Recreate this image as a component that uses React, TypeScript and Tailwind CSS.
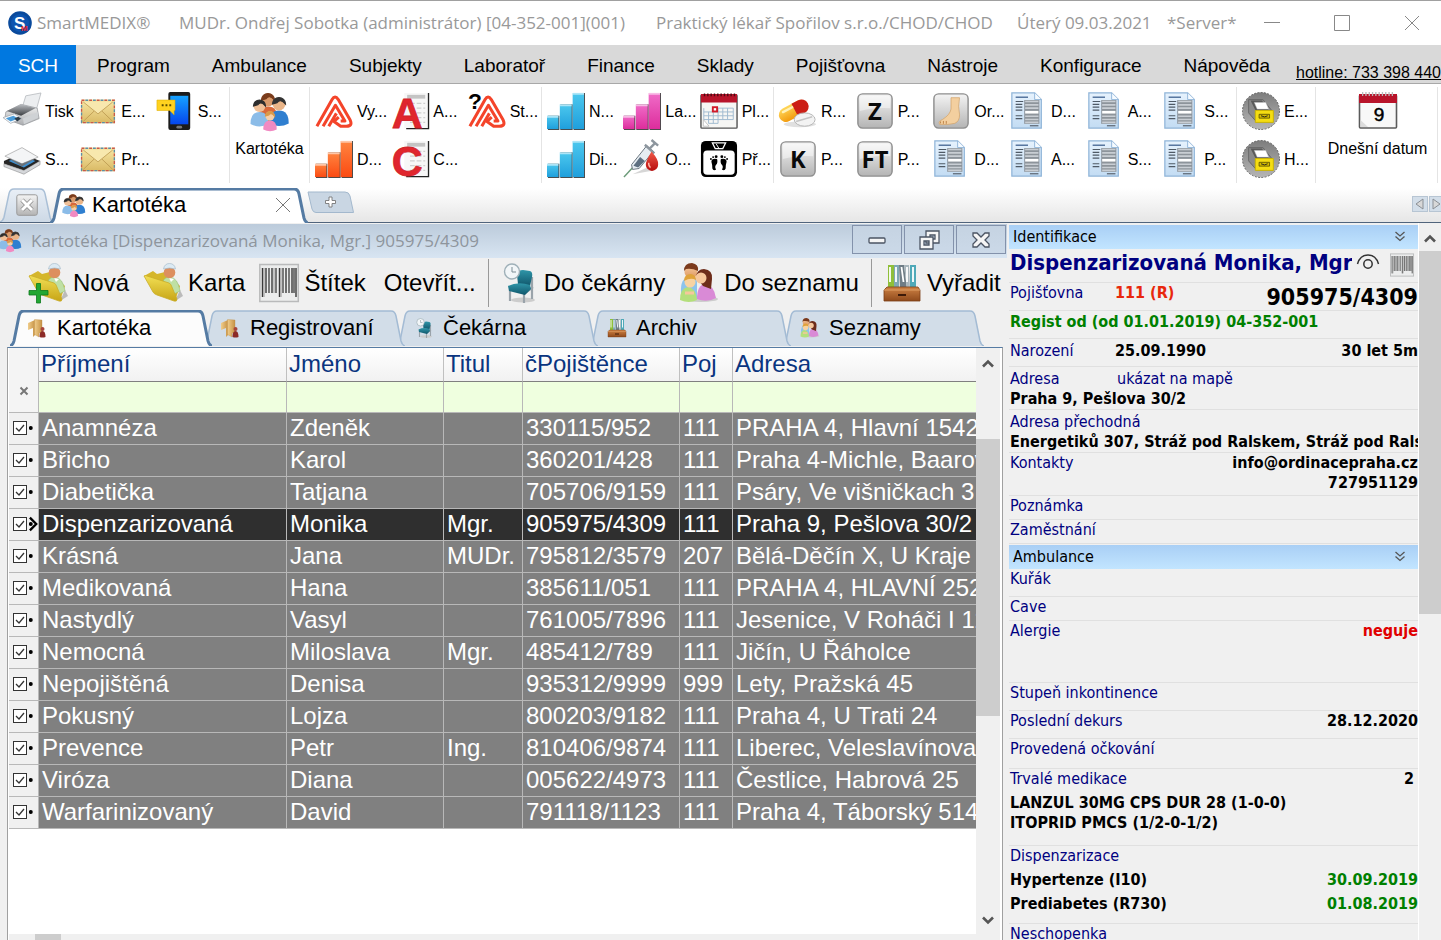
import React from "react";

type IconProps = { className?: string };

const Svg = ({ className = "size-10", children }: { className?: string; children: React.ReactNode }) => (
  <svg viewBox="0 0 40 40" className={`shrink-0 overflow-visible ${className}`} aria-hidden="true">
    {children}
  </svg>
);

const Gradient = ({ id, from, to, flat = false }: { id: string; from: string; to: string; flat?: boolean }) => (
  <linearGradient id={id} x1="0" y1="0" x2={flat ? "1" : "0"} y2={flat ? "0" : "1"}>
    <stop offset="0" stopColor={from} />
    <stop offset="1" stopColor={to} />
  </linearGradient>
);

const Gradients = () => (
  <svg className="absolute size-0" aria-hidden="true">
    <defs>
      <Gradient id="orange" from="#ff8540" to="#fb4a12" />
      <Gradient id="blue" from="#4cc8ee" to="#1f9fdc" />
      <Gradient id="pink" from="#f06cc8" to="#dd2d9c" />
      <Gradient id="key" from="#f4f4f4" to="#b4b4b4" />
      <Gradient id="doc" from="#e6f2fd" to="#c3dcf3" />
      <Gradient id="mail" from="#f8e7a6" to="#d9b964" />
      <Gradient id="phone" from="#16a2ff" to="#0546ee" />
      <Gradient id="folder" from="#f2df55" to="#c7a516" />
      <Gradient id="disc" from="#7d7d7d" to="#b5b5b5" />
      <Gradient id="metal" from="#f5f5f5" to="#a9abae" />
      <Gradient id="printer" from="#b9bcc0" to="#3c3f43" />
      <Gradient id="skin" from="#f6c79c" to="#dc9760" />
      <Gradient id="wood" from="#cf8244" to="#8f4a1c" />
      <Gradient id="chair" from="#2f95a8" to="#10566b" />
      <Gradient id="door" from="#f0cd8b" to="#c69245" flat />
      <Gradient id="blood" from="#f05a4a" to="#b80d0d" />
      <Gradient id="pillY" from="#ffd75a" to="#f29a0c" />
      <Gradient id="tabIdle" from="#e9eff6" to="#cdd9e6" />
    </defs>
  </svg>
);

const Printer = () => (
  <Svg>
    <path d="M20 17 24 4 40 1 35 19Z" fill="#eceef0" stroke="#a9adb2" strokeWidth=".7" />
    <path d="M3 21 19 13 36 17 38 28 21 35 2 28Z" fill="url(#metal)" stroke="#8b8e92" strokeWidth=".7" />
    <path d="M4 20 19 13 34 17 19 25Z" fill="url(#printer)" />
    <path d="M21 28 37 21V27L22 34Z" fill="#cfd2d5" />
    <path d="M0 27 12 23 20 28 8 33Z" fill="#f7f9fb" stroke="#9ba0a6" strokeWidth=".7" />
    <path d="M3 27.500 11 25 16 28 8 31Z" fill="#4b9bd8" />
    <path d="M12 28 16 26 19 28 15 31Z" fill="#2c3b47" />
  </Svg>
);

const Scanner = () => (
  <Svg>
    <path d="M1 22 19 14 39 22 22 32 1 25Z" fill="#262626" />
    <path d="M1 25 22 32 39 22V26L22 36 1 28Z" fill="#d5d7da" stroke="#777" strokeWidth=".5" />
    <path d="M6 22 19 16 34 22 22 29Z" fill="#3e8fd0" />
    <path d="M2 17 20 8 37 18 20 25Z" fill="#f4f5f6" stroke="#a8a8a8" strokeWidth=".8" />
    <path d="M5 19 20 25 35 19 20 28Z" fill="#6d7277" />
  </Svg>
);

const Mail = () => (
  <Svg>
    <rect x="2" y="8" width="36" height="25" rx="1" fill="url(#mail)" />
    <rect x="2.700" y="8.700" width="34.500" height="23.500" fill="none" stroke="#c9584c" strokeWidth="1.400" strokeDasharray="3 5" />
    <rect x="2.700" y="8.700" width="34.500" height="23.500" fill="none" stroke="#5c8fa8" strokeWidth="1.400" strokeDasharray="3 5" strokeDashoffset="4" />
    <path d="M4.500 31 16 20M35.500 31 24 20" stroke="#c09f55" />
    <path d="M4.500 10.500 20 23 35.500 10.500" fill="#f8e8ae" stroke="#c4a45c" />
  </Svg>
);

const Phone = () => (
  <Svg>
    <rect x="13" y="0" width="23" height="40" rx="2" fill="#1b1b1b" />
    <rect x="15" y="4" width="19" height="30" fill="url(#phone)" />
    <rect x="21.500" y="35.500" width="6" height="3" rx="1.500" fill="#777" />
    <path d="M1 8.500H20V19.500H19V24L14.500 19.500H1Z" fill="#ffd21f" stroke="#e0b000" strokeWidth=".6" />
    <path d="M6 14h2M10 14h2M14 14h2" stroke="#5a4a00" strokeWidth="2" />
  </Svg>
);

const Person = ({ x, y, r, hair, skin, shirt }: { x: number; y: number; r: number; hair: string; skin: string; shirt: string }) => (
  <g>
    <path d={`M${x - r * 1.500} ${y + r * 3}q0 ${-r * 2} ${r * 1.500} ${-r * 2}t${r * 1.500} ${r * 2}q${-r * 1.500} ${r * 0.8} ${-r * 3} 0`} fill={shirt} />
    <circle cx={x} cy={y} r={r} fill={skin} />
    <path d={`M${x - r} ${y}a${r} ${r} 0 0 1 ${r * 2} 0q${-r * 0.8} ${-r * 0.9} ${-r * 1.300} ${-r * 0.2}z`} fill={hair} stroke={hair} strokeWidth="1.200" />
  </g>
);

const Family = ({ className }: IconProps) => (
  <Svg className={className}>
    <Person x={18} y={9} r={6.500} hair="#7a3c1c" skin="#d99a6b" shirt="#d9693b" />
    <Person x={29} y={13} r={6.500} hair="#333" skin="#eab588" shirt="#2f7fd0" />
    <Person x={9.500} y={15} r={6} hair="#2d2d2d" skin="#f0c098" shirt="#8bbce8" />
    <Person x={20} y={25} r={4.500} hair="#d99a4a" skin="#f7cfa8" shirt="#f18ac2" />
  </Svg>
);

const Logo = ({ question = false }: { question?: boolean }) => (
  <Svg>
    <g fill="none" stroke="#f4442a" strokeWidth="3.200" strokeLinejoin="round">
      <path d="M2 36 18 8Q21 2.500 24.500 8L37 29.500Q40 36 33 36H27L20 31 25 26.500" />
      <path d="M8.500 36 21.500 14 31.500 30.500H27" />
      <path d="M14.500 36 22.500 22.500" />
    </g>
    {question && (
      <text x="0" y="18" fontFamily="Liberation Sans, sans-serif" fontWeight="700" fontSize="24" fill="#000">?</text>
    )}
  </Svg>
);

const Bars = ({ tone }: { tone: "orange" | "blue" | "pink" }) => {
  const fill = `url(#${tone})`;
  return (
    <Svg>
      <path d="M1 25h12v15H1zM14 13h13v27H14zM28 1h12v39H28z" fill="#4a4a4a" />
      <path d="M0 25h12v14H0z" fill={fill} />
      <path d="M13.500 13H26v26H13.500z" fill={fill} />
      <path d="M27 1h12v38H27z" fill={fill} />
      <path d="M0 25h12v2H0zM13.500 13h12.500v2H13.500zM27 1h12v2H27z" fill="#fff" opacity=".55" />
    </Svg>
  );
};

const LetterSheet = ({ letter }: { letter: string }) => (
  <Svg>
    <path d="M14 1h25v37H14z" fill="#f7f7f7" />
    <path d="M39.500 1v37.500H16" stroke="#222" fill="none" strokeWidth="1.400" />
    <path d="M17 5h19" stroke="#c4c4c4" strokeWidth="4" />
    <path d="M20 12h16M20 17h16M20 22h16M20 27h16M20 32h16" stroke="#cfcfcf" strokeWidth="1.500" strokeDasharray="5 2" />
    <text x="17" y="38" textAnchor="middle" fontFamily="Liberation Sans, sans-serif" fontWeight="700" fontSize="45" fill="#e0262d" stroke="#d0222a" strokeWidth=".8">{letter}</text>
  </Svg>
);

const Syringe = () => (
  <Svg>
    <path d="M10 36 36 24 32 32Z" fill="#bbb" opacity=".6" />
    <path d="M1 39 12 27" stroke="#6b9a78" strokeWidth="1.500" />
    <path d="M9 26 25 6 32 12 17 30 10 31Z" fill="#e6edf2" stroke="#68737c" />
    <path d="M11 27 18 18 23 22 16 29Z" fill="#5d6f80" />
    <path d="M28 9 34 3M30 0l7 6M23 5l10 9" stroke="#8d969e" strokeWidth="2.500" />
    <path d="M30 12q8 9 7 14a6.500 6.500 0 0 1-13 0q0-4 6-14" fill="url(#blood)" />
    <path d="M27 24q0 4 2 5" stroke="#ffb5a8" strokeWidth="1.500" fill="none" />
  </Svg>
);

const Calendar = () => (
  <Svg>
    <rect x="1" y="3" width="38" height="35" rx="1" fill="#f6f6f4" stroke="#555" strokeWidth="1.500" />
    <path d="M1 2h38v9H1z" fill="#b8142a" />
    <path d="M4 3h33" stroke="#4a0a12" strokeWidth="3" strokeDasharray="1.500 2" />
    <path d="M13 17h22M4 21h31M4 25h31M4 29h31M9 33h10M4 17v12M9 21v12M14 17v16M19 17v16M24 17v12M29 17v12M35 17v12" stroke="#9fb9d0" strokeWidth="1" fill="none" />
    <rect x="13.500" y="16" width="4.500" height="4.500" fill="#fff" stroke="#d11a2a" strokeWidth="2" />
    <path d="M3.500 29l6 7H3.500z" fill="#fff" stroke="#aaa" strokeWidth=".7" />
  </Svg>
);

const Scale = () => (
  <Svg>
    <rect x="1" y="1" width="38" height="38" rx="5" fill="#000" />
    <rect x="3.500" y="11" width="33" height="25.500" rx="4" fill="#fff" />
    <path d="M13 3h14l-3 6h-8z" fill="none" stroke="#fff" strokeWidth="1.300" />
    <path d="M20 9 17 4" stroke="#fff" />
    <path d="M18 20q1 4-1 6t0 5q-3 2-4-1 0-4-1-7 0-4 6-3M22 20q-1 4 1 6t0 5q3 2 4-1 0-4 1-7 0-4-6-3" fill="#000" />
    <g fill="#000">
      <circle cx="17" cy="17.500" r="1.500" /><circle cx="13.800" cy="18" r="1" /><circle cx="11.500" cy="20" r="1" />
      <circle cx="23" cy="17.500" r="1.500" /><circle cx="26.200" cy="18" r="1" /><circle cx="28.500" cy="20" r="1" />
    </g>
  </Svg>
);

const Pills = () => (
  <Svg>
    <ellipse cx="22" cy="34" rx="17" ry="3" fill="#ccc" opacity=".6" />
    <g transform="rotate(-28 16 20)">
      <rect x="-1" y="12" width="33" height="15" rx="7.500" fill="url(#pillY)" />
      <path d="M17 12h8a7.500 7.500 0 0 1 0 15h-8z" fill="#cc1f16" />
      <path d="M5 15.500h11" stroke="#fff2b8" strokeWidth="2.500" strokeLinecap="round" />
    </g>
    <ellipse cx="27" cy="29" rx="11" ry="7" fill="#f3f3f3" stroke="#b5b5b5" />
    <path d="M18 31 35 26" stroke="#c4c4c4" strokeWidth="1.500" />
  </Svg>
);

const Key = ({ label }: { label: string }) => (
  <Svg>
    <rect x="2" y="2" width="36" height="36" rx="5" fill="url(#key)" stroke="#8d8d8d" strokeWidth="1.500" />
    <path d="M4 20V7q0-3 3-3h26q3 0 3 3v10Q18 16 4 20" fill="#fff" opacity=".45" />
    <text x="20" y="29" textAnchor="middle" fontFamily="Open Sans, sans-serif" fontWeight="700" fontSize="25" fill="#0a0a0a">{label}</text>
  </Svg>
);

const Foot = () => (
  <Svg>
    <rect x="2" y="2" width="36" height="36" rx="5" fill="url(#key)" stroke="#8d8d8d" strokeWidth="1.500" />
    <path d="M20 6h9q-2 9 0 18 0 7-5 9-8 2-16 1-2-3 3-5 8-5 9-11z" fill="#f3cf9f" stroke="#d3a56c" strokeWidth=".8" />
    <path d="M9 33v-2M12 33.500v-3M15 33.500v-3" stroke="#bb8148" />
  </Svg>
);

const Doc = () => (
  <Svg>
    <path d="M3 1h24l7 7v30H3z" fill="url(#doc)" stroke="#8fb4d8" strokeWidth="1.300" />
    <path d="M27 1v7h7" fill="#f6fbff" stroke="#8fb4d8" />
    <path d="M7 5.500h13" stroke="#4f6f9a" strokeWidth="1.500" />
    <path d="M7 10h8M7 13h7M7 16h7M7 19h7M7 25h7M7 28h7" stroke="#4f5a66" strokeWidth="1.300" />
    <path d="M16 8.500h16v25H16z" fill="#8d949b" />
    <path d="M17 10h14M17 13.500h14M17 17h14M17 25.500h14M17 29h14M17 32h14" stroke="#c9ced4" strokeWidth="1.700" />
    <path d="M17 21.300h14" stroke="#fff" strokeWidth="2.800" />
    <path d="M22 35.500h9" stroke="#6a7684" strokeWidth="1.500" />
  </Svg>
);

const Archive = () => (
  <Svg>
    <circle cx="20" cy="20" r="19.500" fill="url(#disc)" stroke="#5c5c5c" strokeDasharray="2 1.500" />
    <path d="M7 8h15l9 11v11H14L7 22z" fill="#8a8a8a" stroke="#666" />
    <path d="M9 9h12l7 10H14z" fill="#5a5a5a" />
    <path d="M13 11h12l3 7H16z" fill="#fff" stroke="#ccc" strokeWidth=".5" />
    <path d="M14 19.500h19V32H14z" fill="#f5dd12" stroke="#c9b200" />
    <path d="M18 23.500h11v4H18z" fill="#d6bd00" stroke="#4d4400" strokeWidth=".8" />
    <path d="M20 25q4 2.500 7 0" stroke="#222" fill="none" />
  </Svg>
);

const Today = () => (
  <Svg>
    <rect x="1.500" y="4" width="37" height="33" rx="1" fill="#f8f8f8" stroke="#5b5b5b" strokeWidth="1.600" />
    <path d="M1 3h38v9H1z" fill="#b8142a" />
    <path d="M4 3h33" stroke="#bbb" strokeWidth="4" strokeDasharray="1.300 2" />
    <path d="M2.500 29 10 36H2.500z" fill="#dcdcdc" />
    <text x="21" y="29.500" textAnchor="middle" fontFamily="Liberation Sans, sans-serif" fontSize="19" fill="#000" stroke="#000" strokeWidth=".5">9</text>
  </Svg>
);

const PatientFolder = ({ plus = false }: { plus?: boolean }) => (
  <Svg>
    <path d="M32 38 40 33 37 27Z" fill="#bbb" />
    <path d="M1 13 10 8 14 11 22 9 37 23 32 38Z" fill="#d5b62b" />
    <path d="M20 19q1-5 7-5 8 1 10 14l-6 3-11-6z" fill="#bfe0a4" stroke="#93bd78" strokeWidth=".6" />
    <path d="M26 15 28 19 31 16Z" fill="#fff" />
    <circle cx="26.500" cy="9.500" r="5.800" fill="#dd8f5e" />
    <path d="M20.500 6q1-5.500 6-5.500t6 5.500q-6-2-12 0" fill="#dceaf3" stroke="#a8bccb" strokeWidth=".7" />
    <path d="M1 13Q2 12 4 13L26 20Q28 21 28.500 23L34 36Q34 39 31 38L14 32Q11 31 10 29Z" fill="url(#folder)" stroke="#c9ac28" strokeWidth=".8" />
    {plus && <path d="M8.500 20.500h4v7h7.500v4.500h-7.500v8h-4v-8H1v-4.500h7.500z" fill="#22a632" stroke="#0c7a1c" strokeWidth=".8" />}
  </Svg>
);

const Barcode = ({ className }: IconProps) => (
  <Svg className={className}>
    <rect x=".8" y="1.500" width="38.500" height="37" fill="#eceded" stroke="#b9babb" strokeWidth="1.500" />
    <path d="M3.500 5v29M20.500 5v29M37 5v29M7 5v25M13 5v25M27 5v25M33 5v25" stroke="#3a3a3a" strokeWidth="1.400" />
    <path d="M10 5v25M17 5v25M24 5v25M30 5v25M35 5v25" stroke="#6d6d6d" strokeWidth="1.800" />
    <path d="M5 5v29M22 5v29M15 5v25" stroke="#9a9a9a" />
  </Svg>
);

const Chair = ({ className }: IconProps) => (
  <Svg className={className}>
    <g transform="translate(4 0)">
      <ellipse cx="20" cy="37" rx="12" ry="2.500" fill="#ccc" />
      <path d="M7 26v12M29 14v22M21 30v10M30 24 22 30" stroke="#9aa3aa" strokeWidth="2.200" />
      <path d="M14 12q1-5 6-5l7 1q3 1 2 6l-2 9-12-2z" fill="url(#chair)" />
      <path d="M5 23q10-5 22-1l1 4-6 6-16-4z" fill="url(#chair)" />
      <circle cx="9" cy="8.500" r="7.500" fill="#f2f6f8" stroke="#9fb0b8" strokeWidth="1.400" />
      <path d="M9 4v5h4" stroke="#7d8d95" fill="none" />
    </g>
  </Svg>
);

const Parents = ({ className }: IconProps) => (
  <Svg className={className}>
    <ellipse cx="22" cy="36" rx="17" ry="3" fill="#ccc" />
    <path d="M2 30q-1-15 8-16l8 2v20z" fill="#8dc4ec" />
    <circle cx="12" cy="9" r="6.500" fill="url(#skin)" />
    <path d="M5 8q0-8 8-8 7 1 6 8-6-3-12-2z" fill="#7b3a1c" />
    <path d="M18 36q0-14 8-15 9 1 11 14-9 5-19 1" fill="#d98ad6" />
    <path d="M17 14q1-8 8-8 9 1 8 10l-1 10-8-3z" fill="#6d2c1a" />
    <circle cx="22" cy="15" r="5.500" fill="#f6c79c" />
    <path d="M1 37q0-12 8-13 8 1 9 13-8 4-17 0" fill="#b4df7c" />
    <circle cx="11" cy="19" r="5.500" fill="#f8d3a2" />
    <path d="M5 18q0-7 7-7 5 1 5 6-5-3-12 1" fill="#e0a33a" />
    <path d="M6 30h9" stroke="#f6c79c" strokeWidth="3" />
  </Svg>
);

const Binders = ({ className }: IconProps) => (
  <Svg className={className}>
    <path d="M6 2h6v24H6z" fill="#8fbf3a" />
    <path d="M12 2h5v24h-5z" fill="#7fa8b4" />
    <path d="M17 2h5l3 24h-7z" fill="#6f7d86" />
    <path d="M22 2h5l1 24h-3z" fill="#a9b6bc" />
    <path d="M28 2h6v24h-6z" fill="#4fa9b8" />
    <path d="M8 4v15M14 4v15M19.500 4l2 15M25 4v15M31 4v15" stroke="#fff" strokeWidth="1.800" />
    <path d="M5 24h31l2 3v11H2V27z" fill="url(#wood)" stroke="#7b3d14" strokeWidth=".8" />
    <path d="M2 27h36" stroke="#e0a066" />
    <path d="M16 31h8v2h-8z" fill="#3d1a08" />
  </Svg>
);

const Doorway = ({ className }: IconProps) => (
  <Svg className={className}>
    <path d="M0 10 14 4V34L10 38V20L0 24Z" fill="url(#door)" />
    <path d="M13 3 28 4V32L22 30V38L13 33Z" fill="url(#door)" stroke="#b98b48" strokeWidth=".7" />
    <circle cx="29" cy="22" r="4" fill="#a8453a" />
    <path d="M23 38q0-12 6-12 6 0 6 12-6 2-12 0" fill="#8c2b27" />
  </Svg>
);

type Tool = { label: string; icon: React.ReactNode };
type Group = { name: string; width: string; columns: string; tools: Tool[] };

const groups: Record<string, Group> = {
  output: {
    name: "Výstupy", width: "w-[229px]", columns: "grid-cols-3",
    tools: [
      { label: "Tisk", icon: <Printer /> }, { label: "S...", icon: <Scanner /> },
      { label: "E...", icon: <Mail /> }, { label: "Pr...", icon: <Mail /> },
      { label: "S...", icon: <Phone /> },
    ],
  },
  insurance: {
    name: "Vykazování", width: "w-[229px]", columns: "grid-cols-3",
    tools: [
      { label: "Vy...", icon: <Logo /> }, { label: "D...", icon: <Bars tone="orange" /> },
      { label: "A...", icon: <LetterSheet letter="A" /> }, { label: "C...", icon: <LetterSheet letter="C" /> },
      { label: "St...", icon: <Logo question /> },
    ],
  },
  care: {
    name: "Péče", width: "w-[229px]", columns: "grid-cols-3",
    tools: [
      { label: "N...", icon: <Bars tone="blue" /> }, { label: "Di...", icon: <Bars tone="blue" /> },
      { label: "La...", icon: <Bars tone="pink" /> }, { label: "O...", icon: <Syringe /> },
      { label: "Pl...", icon: <Calendar /> }, { label: "Př...", icon: <Scale /> },
    ],
  },
  forms: {
    name: "Formuláře", width: "w-[460px]", columns: "grid-cols-6",
    tools: [
      { label: "R...", icon: <Pills /> }, { label: "P...", icon: <Key label="K" /> },
      { label: "P...", icon: <Key label="Z" /> }, { label: "P...", icon: <Key label="FT" /> },
      { label: "Or...", icon: <Foot /> }, { label: "D...", icon: <Doc /> },
      { label: "D...", icon: <Doc /> }, { label: "A...", icon: <Doc /> },
      { label: "A...", icon: <Doc /> }, { label: "S...", icon: <Doc /> },
      { label: "S...", icon: <Doc /> }, { label: "P...", icon: <Doc /> },
    ],
  },
  archive: {
    name: "Archiv", width: "w-[76px]", columns: "grid-cols-1",
    tools: [{ label: "E...", icon: <Archive /> }, { label: "H...", icon: <Archive /> }],
  },
};

const ToolGroup = ({ group }: { group: Group }) => (
  <div role="group" aria-label={group.name} className={`grid shrink-0 grid-flow-col grid-rows-[48px_48px] ${group.width} ${group.columns}`}>
    {group.tools.map((tool, i) => (
      <button key={i} type="button" className="flex min-w-0 items-center gap-1 pl-[3px] whitespace-nowrap [&>svg]:size-[38px]">
        {tool.icon}
        <span className="pt-0.5">{tool.label}</span>
      </button>
    ))}
  </div>
);

const BigTool = ({ label, width, children }: { label: string; width: string; children: React.ReactNode }) => (
  <button type="button" className={`flex shrink-0 flex-col items-center gap-2 pt-1 whitespace-nowrap ${width}`}>
    {children}
    <span className="leading-5">{label}</span>
  </button>
);

const Divider = ({ className = "mr-0.5" }: IconProps) => (
  <div className={`w-px shrink-0 self-stretch bg-[#e4e4e4] ${className}`} />
);

const menu = ["Program", "Ambulance", "Subjekty", "Laboratoř", "Finance", "Sklady", "Pojišťovna", "Nástroje", "Konfigurace", "Nápověda"];

const TabShape = ({ width, fill, stroke, thick = false }: { width: number; fill: string; stroke: string; thick?: boolean }) => (
  <svg className="absolute inset-0 size-full" viewBox={`0 0 ${width} 36`} preserveAspectRatio="none" aria-hidden="true">
    <path
      d={`M0 36Q3 35 4 31L9 6Q10 1 14 1H${width - 14}Q${width - 10} 1 ${width - 9} 6L${width - 4} 31Q${width - 3} 35 ${width} 36`}
      fill={fill}
      stroke={stroke}
      strokeWidth={thick ? 3 : 1.5}
      vectorEffect="non-scaling-stroke"
    />
  </svg>
);

const listTabs = [
  { label: "Kartotéka", icon: <Doorway className="size-5" />, layer: "z-50" },
  { label: "Registrovaní", icon: <Doorway className="size-5" />, layer: "z-40" },
  { label: "Čekárna", icon: <Chair className="size-5" />, layer: "z-30" },
  { label: "Archiv", icon: <Binders className="size-5" />, layer: "z-20" },
  { label: "Seznamy", icon: <Parents className="size-5" />, layer: "z-10" },
];

const headers = ["Příjmení", "Jméno", "Titul", "čPojištěnce", "Poj", "Adresa"];

const patients = [
  ["Anamnéza", "Zdeněk", "", "330115/952", "111", "PRAHA 4, Hlavní 1542"],
  ["Břicho", "Karol", "", "360201/428", "111", "Praha 4-Michle, Baarova"],
  ["Diabetička", "Tatjana", "", "705706/9159", "111", "Psáry, Ve višničkach 3"],
  ["Dispenzarizovaná", "Monika", "Mgr.", "905975/4309", "111", "Praha 9, Pešlova 30/2"],
  ["Krásná", "Jana", "MUDr.", "795812/3579", "207", "Bělá-Děčín X, U Kraje"],
  ["Medikovaná", "Hana", "", "385611/051", "111", "PRAHA 4, HLAVNÍ 252"],
  ["Nastydlý", "Vasyl", "", "761005/7896", "111", "Jesenice, V Roháči I 12"],
  ["Nemocná", "Miloslava", "Mgr.", "485412/789", "111", "Jičín, U Řáholce"],
  ["Nepojištěná", "Denisa", "", "935312/9999", "999", "Lety, Pražská 45"],
  ["Pokusný", "Lojza", "", "800203/9182", "111", "Praha 4, U Trati 24"],
  ["Prevence", "Petr", "Ing.", "810406/9874", "111", "Liberec, Veleslavínova"],
  ["Viróza", "Diana", "", "005622/4973", "111", "Čestlice, Habrová 25"],
  ["Warfarinizovaný", "David", "", "791118/1123", "111", "Praha 4, Táborský 514"],
];

const Chevron = ({ down = false }: { down?: boolean }) => (
  <svg viewBox="0 0 14 10" className="h-2.5 w-3.5" aria-hidden="true">
    <path d={down ? "M2 2.500 7 7.500 12 2.500" : "M2 7.500 7 2.500 12 7.500"} fill="none" stroke="#555" strokeWidth="2.600" />
  </svg>
);

const ToolbarButton = ({ label, children }: { label: string; children?: React.ReactNode }) => (
  <button type="button" className="flex shrink-0 items-center gap-[5px] whitespace-nowrap">
    {children}
    {label}
  </button>
);

const FrameButton = ({ label, children }: { label: string; children: React.ReactNode }) => (
  <button type="button" aria-label={label} className="flex h-[29px] w-[50px] items-center justify-center border border-[#8392ab] bg-linear-to-b from-[#c5d3e2] to-[#cbd9e8]">
    <svg viewBox="0 0 24 20" className="h-5 w-6" fill="#f5f5f5" stroke="#4b5463" strokeWidth="1.300" aria-hidden="true">
      {children}
    </svg>
  </button>
);

const RecordsTable = () => (
  <table className="w-full table-fixed border-separate border-spacing-0 text-2xl leading-[29px]">
    <colgroup>
      <col className="w-[30px]" />
      <col className="w-[248px]" />
      <col className="w-[157px]" />
      <col className="w-[79px]" />
      <col className="w-[157px]" />
      <col className="w-[53px]" />
      <col />
    </colgroup>
    <thead>
      <tr className="h-[34px] bg-linear-to-b from-white to-[#f1f1f1]">
        <th rowSpan={2} className="border-r border-b border-[#b8b8b8] bg-[#f4f4f4] p-0 align-bottom">
          <button type="button" aria-label="Zrušit filtr" className="mb-4 flex w-full justify-center">
            <svg viewBox="0 0 10 10" className="size-2.5" aria-hidden="true">
              <path d="M1.500 1.500 8.500 8.500M8.500 1.500 1.500 8.500" stroke="#777" strokeWidth="2" />
            </svg>
          </button>
        </th>
        {headers.map((h) => (
          <th key={h} scope="col" className="border-r border-b border-r-[#c0c0c0] border-b-[#808080] p-0 pt-px pl-0.5 text-left align-top font-normal text-[#0a3580] last:border-r-0">
            {h}
          </th>
        ))}
      </tr>
      <tr className="h-[31px]">
        {headers.map((h) => (
          <td key={h} className="border-r border-b border-[#b8b8b8] bg-[#efffdf] p-0 last:border-r-0">
            <input type="text" aria-label={`Filtr ${h}`} className="block h-[30px] w-full bg-transparent px-1 outline-none" />
          </td>
        ))}
      </tr>
    </thead>
    <tbody>
      {patients.map((row) => {
        const selected = row[0] === "Dispenzarizovaná";
        return (
          <tr key={row[0]} className={`h-8 text-white ${selected ? "bg-[#2f2f2f]" : "bg-[#808080]"}`}>
            <td className="border-r border-b border-[#b8b8b8] bg-[#f0f0f0] p-0 align-top">
              <div className="flex h-[30px] items-center gap-0.5 pl-1">
                <label className="relative size-3.5">
                  <input type="checkbox" defaultChecked aria-label={`Označit ${row[0]}`} className="block size-3.5 appearance-none border border-[#333] bg-white" />
                  <svg viewBox="0 0 14 14" className="pointer-events-none absolute inset-0 size-3.5" aria-hidden="true">
                    <path d="M3 7 6 10 11 4" fill="none" stroke="#333" strokeWidth="1.300" />
                  </svg>
                </label>
                <svg viewBox="0 0 10 16" className="h-4 w-2.5" aria-hidden="true">
                  <circle cx="2" cy="8" r="2.200" />
                  {selected && <path d="M1 1 8 8 1 15" fill="none" stroke="#000" strokeWidth="2.600" />}
                </svg>
              </div>
            </td>
            {row.map((cell, i) => (
              <td key={i} className="overflow-hidden border-r border-b border-[#b8b8b8] p-0 pl-[3px] align-top text-clip whitespace-nowrap last:border-r-0">
                {cell}
              </td>
            ))}
          </tr>
        );
      })}
    </tbody>
  </table>
);

const SectionHeader = ({ title }: { title: string }) => (
  <button type="button" className="flex h-6 w-full shrink-0 items-center justify-between bg-linear-to-b from-[#a9cff5] to-[#c2e5ff] pr-3 pl-1 text-black">
    {title}
    <svg viewBox="0 0 12 12" className="size-3" fill="none" stroke="#555" strokeWidth="1.300" aria-hidden="true">
      <path d="M1.500 1 6 5 10.500 1M1.500 5.500 6 9.500 10.500 5.500" />
    </svg>
  </button>
);

const Row = ({ height, label, aside, children }: { height: string; label?: string; aside?: React.ReactNode; children?: React.ReactNode }) => (
  <div className={`shrink-0 overflow-hidden border-b border-[#e0e0e0] pl-px whitespace-nowrap ${height}`}>
    {label && (
      <div className="flex justify-between">
        <span>{label}</span>
        <span className="text-right font-bold text-black">{aside}</span>
      </div>
    )}
    {children}
  </div>
);

const PatientPanel = () => (
  <aside className="flex w-[432px] shrink-0 overflow-hidden bg-[#f0f0f0] text-base leading-5 text-[#000080] [font-family:'DejaVu_Sans_Condensed','DejaVu_Sans',sans-serif]">
    <div className="flex min-w-0 flex-1 flex-col pt-0.5">
      <SectionHeader title="Identifikace" />
      <div className="flex h-[34px] shrink-0 items-start border-b border-[#e0e0e0] pl-px">
        <h2 className="flex-1 overflow-hidden text-[22px] leading-7 font-bold whitespace-nowrap">Dispenzarizovaná Monika, Mgr</h2>
        <button type="button" aria-label="Náhled" className="mt-1 ml-1">
          <svg viewBox="0 0 24 20" className="h-5 w-6" fill="none" stroke="#333" strokeWidth="1.500" aria-hidden="true">
            <path d="M1.500 11Q4 2 12 2T22.500 11" />
            <circle cx="12" cy="11" r="4.200" />
          </svg>
        </button>
        <button type="button" aria-label="Čárový kód" className="mt-1 mr-1 ml-2.5">
          <Barcode className="size-6" />
        </button>
      </div>
      <div className="flex h-7 shrink-0 border-b border-[#e0e0e0] pl-px">
        <span className="w-[105px]">Pojišťovna</span>
        <span className="font-bold text-[#e8280c]">111 (R)</span>
        <strong className="ml-auto text-[23px] leading-7 text-black">905975/4309</strong>
      </div>
      <Row height="h-7 pt-px">
        <span className="font-bold text-[#008000]">Regist od (od 01.01.2019) 04-352-001</span>
      </Row>
      <div className="flex h-7 shrink-0 border-b border-[#e0e0e0] pt-0.5 pl-px">
        <span className="w-[105px]">Narození</span>
        <span className="font-bold text-black">25.09.1990</span>
        <span className="ml-auto font-bold text-black">30 let 5m</span>
      </div>
      <Row height="h-[43px] pt-0.5">
        <div className="flex">
          <span className="w-[107px]">Adresa</span>
          <a href="#mapa">ukázat na mapě</a>
        </div>
        <div className="font-bold text-black">Praha 9, Pešlova 30/2</div>
      </Row>
      <Row height="h-[43px] pt-0.5" label="Adresa přechodná">
        <div className="font-bold text-black">Energetiků 307, Stráž pod Ralskem, Stráž pod Ralskem</div>
      </Row>
      <Row height="h-[43px]" label="Kontakty" aside={<>info@ordinacepraha.cz<br />727951129</>} />
      <Row height="h-6" label="Poznámka" />
      <Row height="h-6" label="Zaměstnání" />
      <div className="shrink-0 pt-px">
        <SectionHeader title="Ambulance" />
      </div>
      <Row height="h-7" label="Kuřák" />
      <Row height="h-6" label="Cave" />
      <Row height="h-[62px]" label="Alergie" aside={<span className="text-[#e00000]">neguje</span>} />
      <Row height="h-7" label="Stupeň inkontinence" />
      <Row height="h-7" label="Poslední dekurs" aside="28.12.2020" />
      <Row height="h-[30px]" label="Provedená očkování" />
      <Row height="h-[77px]" label="Trvalé medikace" aside={<span className="pr-1">2</span>}>
        <div className="pt-1 font-bold text-black">LANZUL 30MG CPS DUR 28 (1-0-0)<br />ITOPRID PMCS (1/2-0-1/2)</div>
      </Row>
      <Row height="h-[78px]" label="Dispenzarizace">
        <div className="flex justify-between pt-1 font-bold text-black">
          Hypertenze (I10)<span className="text-[#008000]">30.09.2019</span>
        </div>
        <div className="flex justify-between pt-1 font-bold text-black">
          Prediabetes (R730)<span className="text-[#008000]">01.08.2019</span>
        </div>
      </Row>
      <Row height="h-7" label="Neschopenka" />
    </div>
    <div className="flex w-[23px] shrink-0 flex-col border-l border-white" aria-hidden="true">
      <div className="flex h-7 shrink-0 items-center justify-center pt-1"><Chevron /></div>
      <div className="grow-[363] bg-[#cdcdcd]" />
      <div className="grow-[326]" />
    </div>
  </aside>
);

export default function App() {
  return (
    <div className="flex h-screen flex-col overflow-hidden bg-white text-base text-black [font-family:'Liberation_Sans',Arial,sans-serif]">
      <Gradients />

      <header className="flex h-[45px] shrink-0 items-center border-t border-[#a0a0a0] pl-2 text-[17px] whitespace-nowrap text-[#999] [font-family:'Open_Sans','Noto_Sans',sans-serif]">
        <svg viewBox="0 0 24 24" className="size-6 shrink-0" aria-hidden="true">
          <circle cx="12" cy="12" r="11.800" fill="#0a4a9c" />
          <circle cx="12" cy="12" r="9" fill="#0d55b0" />
          <text x="6" y="18" fontFamily="Liberation Sans, sans-serif" fontWeight="700" fontSize="17" fill="#fff">S</text>
          <text x="13" y="20" fontFamily="Liberation Sans, sans-serif" fontWeight="700" fontSize="8" fill="#e8202a">M</text>
        </svg>
        <span className="ml-[5px] w-[142px]">SmartMEDIX®</span>
        <span className="w-[477px]">MUDr. Ondřej Sobotka (administrátor) [04-352-001](001)</span>
        <span className="w-[361px]">Praktický lékař Spořilov s.r.o./CHOD/CHOD</span>
        <span className="w-[150px]">Úterý 09.03.2021</span>
        <span>*Server*</span>
        <div className="ml-auto flex gap-[54px] pr-[21px]">
          {[
            ["Minimalizovat", "M0 7.500h16"],
            ["Maximalizovat", "M.5.5h15v15H.5z"],
            ["Zavřít", "M1 1 15 15M15 1 1 15"],
          ].map(([label, d]) => (
            <button key={label} type="button" aria-label={label}>
              <svg viewBox="0 0 16 16" className="size-4" fill="none" stroke="#888" aria-hidden="true"><path d={d} /></svg>
            </button>
          ))}
        </div>
      </header>

      <nav className="flex h-[39px] shrink-0 items-center border-b border-[#a8a8a8] bg-[#d9d9d9] text-[19px] whitespace-nowrap">
        <a href="#sch" className="flex h-[39px] w-[76px] shrink-0 items-center justify-center bg-[#0078e0] pt-1 text-white">SCH</a>
        <div className="flex shrink-0 gap-[42px] pt-1 pl-[21px]">
          {menu.map((m) => (
            <a key={m} href="#menu">{m}</a>
          ))}
        </div>
        <a href="tel:733398440" className="ml-auto self-end text-base leading-5 underline">hotline: 733 398 440</a>
      </nav>

      <div className="flex h-[104px] shrink-0 overflow-hidden pt-[3px] pb-[5px]">
        <ToolGroup group={groups.output} />
        <Divider className="" />
        <BigTool label="Kartotéka" width="w-[79px]"><Family /></BigTool>
        <Divider />
        <ToolGroup group={groups.insurance} />
        <Divider />
        <ToolGroup group={groups.care} />
        <Divider />
        <ToolGroup group={groups.forms} />
        <Divider />
        <ToolGroup group={groups.archive} />
        <Divider />
        <BigTool label="Dnešní datum" width="w-[119px]"><Today /></BigTool>
        <Divider />
      </div>

      <div className="flex h-[35px] shrink-0 items-start border-b border-[#50647c] bg-linear-to-b from-white to-[#e6e6e6]">
        <button type="button" aria-label="Zavřít vše" className="relative flex h-[34px] w-[54px] items-center justify-center">
          <TabShape width={54} fill="url(#tabIdle)" stroke="#a9bfd6" />
          <svg viewBox="0 0 22 22" className="relative size-[22px]" aria-hidden="true">
            <rect x=".8" y=".8" width="20.500" height="20.500" rx="2" fill="url(#key)" stroke="#999" />
            <path d="M6 6 16 16M16 6 6 16" stroke="#8a8a8a" strokeWidth="4.500" />
            <path d="M6 6 16 16M16 6 6 16" stroke="#fff" strokeWidth="3" />
          </svg>
        </button>
        <div className="relative z-10 -ml-1 flex h-[35px] w-[258px] items-center pb-0.5 pl-3 text-[22px]">
          <TabShape width={258} fill="#fff" stroke="#557ba3" thick />
          <span className="relative flex w-full items-center gap-1.5 pr-[18px]">
            <Family className="size-6" />
            Kartotéka
            <button type="button" aria-label="Zavřít kartu" className="ml-auto">
              <svg viewBox="0 0 14 14" className="size-3.5" aria-hidden="true"><path d="M0 0 14 14M14 0 0 14" stroke="#777" /></svg>
            </button>
          </span>
        </div>
        <button type="button" aria-label="Nová karta" className="mt-[3px] -ml-px h-[22px] w-[47px]">
          <svg viewBox="0 0 47 22" className="h-[22px] w-[47px]" aria-hidden="true">
            <path d="M1 1H38Q42 1 43 5L46.500 21.500H9Q6 21.500 5 18Z" fill="#c9d6e3" stroke="#a3b8cd" />
            <path d="M22 6h3v3.500h3.500v3H25V16h-3v-3.500h-3.500v-3H22z" fill="#fff" stroke="#777" strokeWidth=".9" />
          </svg>
        </button>
        <div className="mt-2 ml-auto flex gap-px overflow-hidden">
          {["M11 3v10L4 8z", "M4 3v10l7-5z"].map((d, i) => (
            <button key={d} type="button" aria-label={i ? "Další karty" : "Předchozí karty"} className={i ? "w-3 overflow-hidden" : ""}>
              <svg viewBox="0 0 16 16" className="size-4" aria-hidden="true">
                <rect x=".5" y=".5" width="15" height="15" fill="#d3dee9" stroke="#b7c5d3" />
                <path d={d} fill="#d8d8d8" stroke="#8a8f95" />
              </svg>
            </button>
          ))}
        </div>
      </div>

      <div className="flex min-h-0 flex-1">
        <main className="flex min-w-0 flex-1 flex-col bg-[#f0f0f0] pt-px">
          <div className="flex h-[34px] shrink-0 items-start bg-linear-to-b from-[#bccbdb] to-[#d8e5f2]">
            <Family className="mt-1 -ml-0.5 size-6" />
            <h1 className="ml-[9px] text-[17px] leading-[34px] whitespace-nowrap text-[#8e959d] [font-family:'Open_Sans','Noto_Sans',sans-serif]">
              Kartotéka [Dispenzarizovaná Monika, Mgr.] 905975/4309
            </h1>
            <div className="mt-px ml-auto flex gap-0.5 pr-px">
              <FrameButton label="Minimalizovat okno"><rect x="4" y="8" width="16" height="5" rx="1" /></FrameButton>
              <FrameButton label="Obnovit okno">
                <path fillRule="evenodd" d="M9 1h13v12H9zM13 5v4h5V5z" />
                <path fillRule="evenodd" d="M3 7h13v12H3zM7 11v4h5v-4z" />
              </FrameButton>
              <FrameButton label="Zavřít okno">
                <path d="M4 3h4l4 4 4-4h4v3l-4 4 4 4v3h-4l-4-4-4 4H4v-3l4-4-4-4z" />
              </FrameButton>
            </div>
          </div>

          <div className="flex h-[52px] shrink-0 items-center gap-3.5 overflow-hidden pb-0.5 pl-7 text-2xl">
            <ToolbarButton label="Nová"><PatientFolder plus /></ToolbarButton>
            <ToolbarButton label="Karta"><PatientFolder /></ToolbarButton>
            <ToolbarButton label="Štítek"><Barcode /></ToolbarButton>
            <div className="pl-1"><ToolbarButton label="Otevřít..." /></div>
            <div className="-mr-1 -ml-0.5 h-12 w-px shrink-0 bg-[#999]" />
            <ToolbarButton label="Do čekárny"><Chair /></ToolbarButton>
            <ToolbarButton label="Do seznamu"><Parents /></ToolbarButton>
            <div className="-mr-1 -ml-0.5 h-12 w-px shrink-0 bg-[#999]" />
            <ToolbarButton label="Vyřadit"><Binders /></ToolbarButton>
          </div>

          <div role="tablist" className="relative z-0 flex h-[37px] shrink-0 pl-2.5 text-[22px]">
            {listTabs.map((t, i) => (
              <button key={t.label} type="button" role="tab" aria-selected={i === 0} className={`relative -mr-[9px] h-9 w-[202px] shrink-0 pb-px text-left ${t.layer}`}>
                <TabShape width={202} fill={i ? "#d2dde8" : "#fcfcfc"} stroke={i ? "#a3bbd4" : "#557ba3"} thick={i === 0} />
                <span className="relative flex items-center gap-[9px] pl-[18px]">
                  {t.icon}
                  {t.label}
                </span>
              </button>
            ))}
          </div>

          <div className="mr-1 ml-[7px] flex min-h-0 flex-1 border-x border-t border-x-[#a0a0a0] border-t-[#557ba3] bg-white pl-px">
            <div className="flex min-w-0 flex-1 flex-col">
              <div className="min-h-0 flex-1 overflow-hidden">
                <RecordsTable />
              </div>
              <div className="h-1.5 shrink-0 bg-[#f0f0f0] pl-[26px]" aria-hidden="true">
                <div className="h-full w-[26px] bg-[#cdcdcd]" />
              </div>
            </div>
            <div className="flex w-[26px] shrink-0 flex-col border-r-2 border-white bg-[#f0f0f0]" aria-hidden="true">
              <div className="flex h-8 shrink-0 items-center justify-center"><Chevron /></div>
              <div className="grow-[59]" />
              <div className="grow-[277] bg-[#cdcdcd]" />
              <div className="grow-[188]" />
              <div className="flex h-9 shrink-0 items-start justify-center pt-[11px]"><Chevron down /></div>
            </div>
          </div>
        </main>
        <div className="w-0.5 shrink-0 bg-[#f0f0f0]" />
        <PatientPanel />
      </div>
    </div>
  );
}
